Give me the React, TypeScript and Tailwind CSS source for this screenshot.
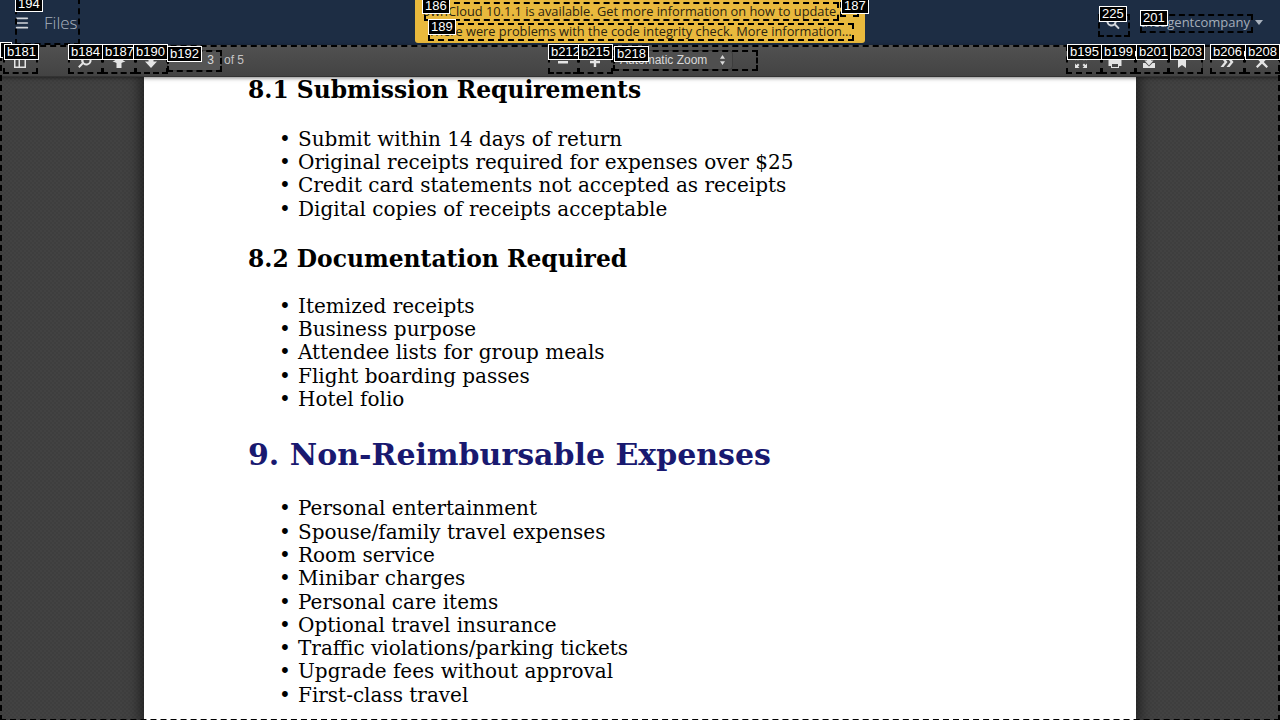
import React from 'react';
import { Menu } from 'lucide-react';

type Box = { label: string; x: number; y: number; w: number; h: number; lx: number; ly: number };

// debug overlay boxes baked into the screenshot
const boxes: Box[] = [
  { label: '', x: 0, y: 45, w: 1280, h: 676, lx: 0, ly: 42 },
  { label: '194', x: 15, y: -2, w: 65, h: 47, lx: 15, ly: -4 },
  { label: '186', x: 424, y: 2, w: 415, h: 19, lx: 422, ly: -2 },
  { label: '187', x: 840, y: 2, w: 19, h: 15, lx: 841, ly: -2 },
  { label: '189', x: 428, y: 23, w: 426, h: 18, lx: 428, ly: 19 },
  { label: '225', x: 1098, y: 14, w: 32, h: 23, lx: 1099, ly: 6 },
  { label: '201', x: 1140, y: 14, w: 113, h: 19, lx: 1140, ly: 10 },
  { label: 'b181', x: 3, y: 45, w: 35, h: 29, lx: 4, ly: 44 },
  { label: 'b184', x: 68, y: 45, w: 35, h: 29, lx: 68, ly: 44 },
  { label: 'b187', x: 102, y: 45, w: 34, h: 29, lx: 102, ly: 44 },
  { label: 'b190', x: 135, y: 45, w: 33, h: 29, lx: 133, ly: 44 },
  { label: 'b192', x: 167, y: 50, w: 55, h: 22, lx: 167, ly: 46 },
  { label: 'b212', x: 548, y: 45, w: 31, h: 29, lx: 548, ly: 44 },
  { label: 'b215', x: 578, y: 45, w: 35, h: 29, lx: 578, ly: 44 },
  { label: 'b218', x: 613, y: 50, w: 145, h: 21, lx: 614, ly: 46 },
  { label: 'b195', x: 1066, y: 45, w: 36, h: 29, lx: 1067, ly: 44 },
  { label: 'b199', x: 1101, y: 45, w: 35, h: 29, lx: 1101, ly: 44 },
  { label: 'b201', x: 1135, y: 45, w: 34, h: 29, lx: 1136, ly: 44 },
  { label: 'b203', x: 1168, y: 45, w: 35, h: 29, lx: 1170, ly: 44 },
  { label: 'b206', x: 1210, y: 45, w: 35, h: 29, lx: 1210, ly: 44 },
  { label: 'b208', x: 1244, y: 45, w: 37, h: 29, lx: 1245, ly: 44 },
];

const ToolIcon: React.FC<{ className?: string; children: React.ReactNode }> = ({ className = '', children }) => (
  <svg viewBox="0 0 16 16" className={`block w-4 h-4 ${className}`} fill="#e4e4e4">
    {children}
  </svg>
);

const ToolBtn: React.FC<{ w: string; children: React.ReactNode }> = ({ w, children }) => (
  <div className={`${w} h-7 pt-[9px] flex justify-center`}>{children}</div>
);

const Bullets: React.FC<{ items: string[] }> = ({ items }) => (
  <ul className="pl-[31px]">
    {items.map(item => (
      <li key={item} className="flex h-[23.3px] items-center whitespace-nowrap">
        <span className="w-[19px]">•</span>
        <span>{item}</span>
      </li>
    ))}
  </ul>
);

const App: React.FC = () => {
  return (
    <div className="relative w-[1280px] h-[720px] overflow-hidden bg-[#404040] bg-[repeating-conic-gradient(#424242_0_25%,#3e3e3e_0_50%)] bg-[length:4px_4px] font-['Open_Sans',sans-serif]">
      {/* top nav */}
      <header className="h-[45px] bg-[#1d2d44] flex items-start justify-between relative">
        <div className="flex items-center h-[45px] pl-[14px] text-[#a9b2be]">
          <Menu size={16} strokeWidth={2.5} className="text-[#d2d5da]" />
          <span className="ml-[14px] text-[17px] font-light">Files</span>
        </div>
        <div className="absolute left-[415px] top-0 w-[450px] h-[43px] bg-[#e9b93d] rounded-b-[3px] text-[12.8px] text-[#2b2410] text-center pt-px leading-[20px]">
          <div className="pr-[18px]">ownCloud 10.1.1 is available. Get more information on how to update.</div>
          <div>There were problems with the code integrity check. More information…</div>
        </div>
        <div className="flex items-center h-[45px] text-[#a5adba] text-[13px]">
          <svg viewBox="0 0 16 16" className="w-4 h-4 mr-[19px]" fill="#d2d5da">
            <path d="M6.500 1.500a5 5 0 1 0 3 9l3.800 3.800 1.400-1.400-3.800-3.800a5 5 0 0 0-4.400-7.600zm0 2a3 3 0 1 1 0 6 3 3 0 0 1 0-6z" fillRule="evenodd" />
          </svg>
          <span>theagentcompany</span>
          <svg viewBox="0 0 8 5" className="w-2 h-[5px] ml-[5px] mr-[17px]" fill="#a9b2be"><path d="M0 0h8L4 5z" /></svg>
        </div>
      </header>

      {/* pdf toolbar */}
      <div className="relative z-10 h-8 bg-gradient-to-b from-[#515151] to-[#434343] border-b border-[#333] flex items-start justify-between shadow-[0_1px_4px_rgba(0,0,0,0.5)] font-['Liberation_Sans',sans-serif] text-xs text-[#d9d9d9]">
        <div className="flex items-start pl-[3px]">
          <ToolBtn w="w-[34px]">
            <ToolIcon><path d="M2 3h12v11H2zM3.500 4.500v8h3v-8zM8 4.500v8h4.500v-8z" fillRule="evenodd" /></ToolIcon>
          </ToolBtn>
          <div className="w-[31px]" />
          <ToolBtn w="w-[34px]">
            <ToolIcon><path d="M9.500 1.500a5 5 0 1 1-3.300 8.750l-3.700 3.700-1.400-1.400 3.700-3.700A5 5 0 0 1 9.500 1.500zm0 2a3 3 0 1 0 0 6 3 3 0 0 0 0-6z" fillRule="evenodd" /></ToolIcon>
          </ToolBtn>
          <ToolBtn w="w-[33px]">
            <ToolIcon><path d="M8 2C10 5 12 6 14.500 8 12.500 8 11 8.500 10.500 9V14H5.500V9C5 8.500 3.500 8 1.500 8 4 6 6 5 8 2z" /></ToolIcon>
          </ToolBtn>
          <ToolBtn w="w-[32px]">
            <ToolIcon><path d="M5.500 1.500h5v6H14l-6 6.500-6-6.500h3.500z" /></ToolIcon>
          </ToolBtn>
          <div className="mt-[5px] w-[55px] h-[21px] bg-[#555] border border-[#3d3d3d] rounded-sm text-right pr-[7px] leading-[19px]">3</div>
          <span className="ml-[2px] mt-[8px] leading-[14px] text-[#c4c4c4]">of 5</span>
        </div>

        <div className="absolute left-[548px] top-0 flex items-start">
          <ToolBtn w="w-[30px]">
            <ToolIcon><rect x="3" y="7" width="10" height="2.500" /></ToolIcon>
          </ToolBtn>
          <ToolBtn w="w-[34px]">
            <ToolIcon><path d="M6.800 3h2.400v3.800H13v2.400H9.200V13H6.800V9.200H3V6.800h3.800z" /></ToolIcon>
          </ToolBtn>
          <div className="ml-px mt-[5px] w-[120px] h-5 bg-[#4f4f4f] border border-[#3d3d3d] rounded-sm flex items-center justify-between pl-[6px] pr-[6px] text-[#d9d9d9]">
            <span>Automatic Zoom</span>
            <svg viewBox="0 0 8 12" className="w-[7px] h-[10px]" fill="#d9d9d9"><path d="M4 0l3 4.500H1zM4 12L1 7.500h6z" /></svg>
          </div>
        </div>

        <div className="flex items-start">
          <ToolBtn w="w-[35px]">
            <ToolIcon><path d="M2 9.500l1.500 1.500L5 9.500 6.500 11 5 12.500 6.500 14H2zM14 9.500V14H9.500L11 12.500 9.500 11 11 9.500l1.500 1.500zM2 2h4.500L5 3.500 6.500 5 5 6.500 3.500 5 2 6.500zM9.500 2H14v4.500L12.500 5 11 6.500 9.500 5 11 3.500z" /></ToolIcon>
          </ToolBtn>
          <ToolBtn w="w-[34px]">
            <ToolIcon><path d="M4 2h8v3h2.500v7H12v2H4v-2H1.500V5H4zm1 1v2h6V3zm0 7v3h6v-3z" fillRule="evenodd" /></ToolIcon>
          </ToolBtn>
          <ToolBtn w="w-[33px]">
            <ToolIcon><path d="M2 9h2.500L8 12.500 11.500 9H14v5H2zM6 2h4v4.500h2.500L8 11.500 3.500 6.500H6z" /></ToolIcon>
          </ToolBtn>
          <ToolBtn w="w-[34px]">
            <ToolIcon><path d="M4 1.500h8V14l-4-3-4 3z" /></ToolIcon>
          </ToolBtn>
          <div className="w-px h-5 mt-[5px] mx-[3px] bg-[#333]" />
          <div className="w-1" />
          <ToolBtn w="w-[34px]">
            <ToolIcon><path d="M1.500 3h3l4 5-4 5h-3l4-5zM7.500 3h3l4 5-4 5h-3l4-5z" /></ToolIcon>
          </ToolBtn>
          <ToolBtn w="w-[36px]">
            <ToolIcon><path d="M3.500 2L8 6.200 12.500 2 14 3.500 9.800 8l4.200 4.500-1.500 1.500L8 9.800 3.500 14 2 12.500 6.200 8 2 3.500z" /></ToolIcon>
          </ToolBtn>
        </div>
      </div>

      {/* document page */}
      <main className="absolute left-[144px] top-[77px] w-[992px] h-[643px] bg-white shadow-[0_0_12px_4px_rgba(0,0,0,0.5)] pl-[104px] pt-px text-black font-['DejaVu_Serif',serif] text-[20px]">
        <h3 className="font-bold text-[23.400px] leading-[25px]">8.1 Submission Requirements</h3>
        <div className="h-[24px]" />
        <Bullets items={['Submit within 14 days of return', 'Original receipts required for expenses over $25', 'Credit card statements not accepted as receipts', 'Digital copies of receipts acceptable']} />
        <h3 className="font-bold text-[23.400px] leading-[30px] mt-[24px]">8.2 Documentation Required</h3>
        <div className="h-[20px]" />
        <Bullets items={['Itemized receipts', 'Business purpose', 'Attendee lists for group meals', 'Flight boarding passes', 'Hotel folio']} />
        <h2 className="font-bold text-[30px] leading-[40px] mt-[24px] text-[#191970]">9. Non-Reimbursable Expenses</h2>
        <div className="h-[22px]" />
        <Bullets items={['Personal entertainment', 'Spouse/family travel expenses', 'Room service', 'Minibar charges', 'Personal care items', 'Optional travel insurance', 'Traffic violations/parking tickets', 'Upgrade fees without approval', 'First-class travel']} />
      </main>

      {/* overlay boxes and labels */}
      <div className="absolute inset-0 z-20 pointer-events-none">
        {boxes.map(b => (
          <React.Fragment key={b.label + b.x}>
            <div
              className="absolute border-2 border-dashed border-black"
              style={{ left: b.x, top: b.y, width: b.w, height: b.h }}
            />
            <div
              className="absolute h-[16px] min-w-[12px] bg-black border border-white text-white text-[13px] leading-[14px] px-[2px] font-['Liberation_Sans',sans-serif]"
              style={{ left: b.lx, top: b.ly }}
            >
              {b.label}
            </div>
          </React.Fragment>
        ))}
      </div>
    </div>
  );
};

export default App;
